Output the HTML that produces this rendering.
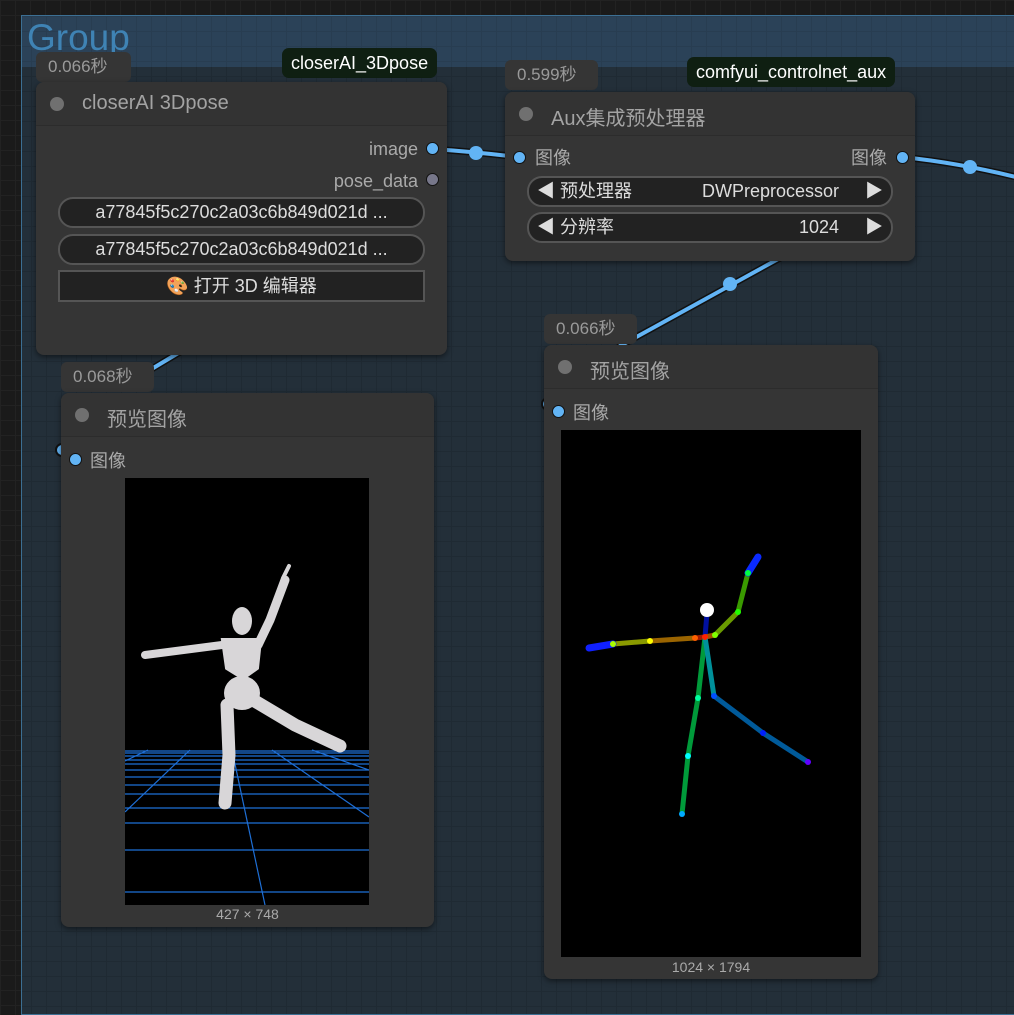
<!DOCTYPE html>
<html><head><meta charset="utf-8"><style>
*{box-sizing:border-box;margin:0;padding:0}
body{width:1014px;height:1005px;overflow:hidden;background:#1a1a1a;position:relative;font-family:"Liberation Sans","Noto Sans CJK SC",sans-serif;
background-image:linear-gradient(#222 1px,transparent 1px),linear-gradient(90deg,#222 1px,transparent 1px);background-size:15px 15px}
.grp{position:absolute;left:21px;top:15px;width:1010px;height:1000px;border:1px solid #3c6f93;background:#232f39;
background-image:linear-gradient(#1f2a33 1px,transparent 1px),linear-gradient(90deg,#1f2a33 1px,transparent 1px);background-size:15px 15px;background-position:-6px 0}
.gh{position:absolute;left:0;top:0;right:0;height:51px;background:#2b4258;background-image:linear-gradient(#283d51 1px,transparent 1px),linear-gradient(90deg,#283d51 1px,transparent 1px);background-size:15px 15px;background-position:-6px 0}
.gt{position:absolute;left:5px;top:1px;font-size:37px;color:#3f83b4}
.abs{position:absolute}
.node{position:absolute;background:#353535;border-radius:8px;box-shadow:0 2px 6px rgba(0,0,0,.5)}
.nt{height:44px;border-bottom:1px solid #2c2c2c;position:relative;font-size:20px;color:#a3a3a3;border-radius:8px 8px 0 0;background:#333}
.nt .d{position:absolute;left:14px;top:15px;width:14px;height:14px;border-radius:50%;background:#707070}
.nt span{position:absolute;left:46px;top:10px}
.time{position:absolute;background:#353535;border-radius:6px;color:#9a9a9a;font-size:17px;padding:0 12px;height:30px;line-height:30px}
.badge{position:absolute;background:#0f1f12;color:#fff;border-radius:7px;font-size:18px;height:30px;line-height:30px;padding:0 9px}
.lbl{position:absolute;font-size:18px;color:#aaa;line-height:20px}
.dot{position:absolute;width:13px;height:13px;border-radius:50%;background:#62b4f5;border:1.5px solid #111}
.w{position:absolute;height:31px;border:2px solid #555;border-radius:15px;background:#222;color:#ddd;font-size:18px;line-height:27px}
.w span{position:absolute;top:0}
</style></head><body>
<div class="grp"><div class="gh"></div><div class="gt">Group</div></div>

<svg class="abs" style="left:0;top:0" width="1014" height="1005">
<g fill="none" stroke-linecap="round">
<path d="M433 149 Q476 152 518 157" stroke="#111" stroke-width="7"/>
<path d="M433 149 Q476 152 518 157" stroke="#62b4f5" stroke-width="4"/>
<path d="M902 157 Q960 163 1020 178" stroke="#111" stroke-width="7"/>
<path d="M902 157 Q960 163 1020 178" stroke="#62b4f5" stroke-width="4"/>
<path d="M780 258 L620 346" stroke="#111" stroke-width="7"/>
<path d="M780 258 L620 346" stroke="#62b4f5" stroke-width="4"/>
<path d="M180 352 L140 376" stroke="#111" stroke-width="7"/>
<path d="M180 352 L140 376" stroke="#62b4f5" stroke-width="4"/>
</g>
<circle cx="476" cy="153" r="7" fill="#62b4f5"/>
<circle cx="970" cy="167" r="7" fill="#62b4f5"/>
<circle cx="730" cy="284" r="7" fill="#62b4f5"/>
<circle cx="62" cy="450" r="6" fill="#62b4f5" stroke="#111" stroke-width="2"/>
<circle cx="548" cy="404" r="6" fill="#62b4f5" stroke="#111" stroke-width="2"/>
</svg>

<!-- node 1 -->
<div class="time" style="left:36px;top:52px;width:95px">0.066秒</div>
<div class="badge" style="left:282px;top:48px">closerAI_3Dpose</div>
<div class="node" style="left:36px;top:82px;width:411px;height:273px">
<div class="nt"><div class="d"></div><span>closerAI 3Dpose</span></div>
<div class="lbl" style="right:29px;top:57px">image</div>
<div class="dot" style="left:390px;top:60px"></div>
<div class="lbl" style="right:29px;top:89px">pose_data</div>
<div class="dot" style="left:390px;top:91px;background:#77778a"></div>
<div class="w" style="left:22px;top:115px;width:367px;text-align:center">a77845f5c270c2a03c6b849d021d ...</div>
<div class="w" style="left:22px;top:152px;width:367px;text-align:center">a77845f5c270c2a03c6b849d021d ...</div>
<div class="w" style="left:22px;top:188px;width:367px;height:32px;border-radius:0;text-align:center;line-height:28px">🎨 打开 3D 编辑器</div>
</div>

<!-- node 2 -->
<div class="time" style="left:505px;top:60px;width:93px">0.599秒</div>
<div class="badge" style="left:687px;top:57px">comfyui_controlnet_aux</div>
<div class="node" style="left:505px;top:92px;width:410px;height:169px">
<div class="nt"><div class="d"></div><span>Aux集成预处理器</span></div>
<div class="dot" style="left:8px;top:59px"></div>
<div class="lbl" style="left:30px;top:56px">图像</div>
<div class="lbl" style="right:28px;top:56px">图像</div>
<div class="dot" style="left:391px;top:59px"></div>
<div class="w" style="left:22px;top:84px;width:366px"><span style="left:8px">◀ 预处理器</span><span style="right:52px">DWPreprocessor</span><span style="right:8px">▶</span></div>
<div class="w" style="left:22px;top:120px;width:366px"><span style="left:8px">◀ 分辨率</span><span style="right:52px">1024</span><span style="right:8px">▶</span></div>
</div>

<!-- node 3 -->
<div class="time" style="left:61px;top:362px;width:93px">0.068秒</div>
<div class="node" style="left:61px;top:393px;width:373px;height:534px">
<div class="nt"><div class="d"></div><span>预览图像</span></div>
<div class="dot" style="left:8px;top:60px"></div>
<div class="lbl" style="left:29px;top:58px">图像</div>
<svg class="abs" style="left:64px;top:85px" width="244" height="427">
<rect width="244" height="427" fill="#000"/>
<g stroke="#1e6fd6" stroke-width="1.2">
<line x1="0" y1="273" x2="244" y2="273"/><line x1="0" y1="275" x2="244" y2="275"/><line x1="0" y1="278" x2="244" y2="278"/><line x1="0" y1="282" x2="244" y2="282"/><line x1="0" y1="286" x2="244" y2="286"/><line x1="0" y1="292" x2="244" y2="292"/><line x1="0" y1="299" x2="244" y2="299"/><line x1="0" y1="307" x2="244" y2="307"/><line x1="0" y1="316" x2="244" y2="316"/><line x1="0" y1="330" x2="244" y2="330"/><line x1="0" y1="345" x2="244" y2="345"/><line x1="0" y1="372" x2="244" y2="372"/><line x1="0" y1="414" x2="244" y2="414"/>
<line x1="107" y1="272" x2="140" y2="427"/><line x1="65" y1="272" x2="0" y2="334"/><line x1="23" y1="272" x2="0" y2="283"/><line x1="147" y1="272" x2="244" y2="339"/><line x1="187" y1="272" x2="244" y2="292"/>
</g>
<g fill="#d8d6d8" stroke="#d8d6d8" stroke-linecap="round">
<path d="M97 167 L20 177" stroke-width="8" fill="none"/>
<path d="M133 167 L145 142 L160 102" stroke-width="9" fill="none"/>
<path d="M102 227 L104 277 L100 325" stroke-width="13" fill="none"/>
<path d="M128 222 L170 247 L215 268" stroke-width="13" fill="none"/>
<ellipse cx="117" cy="143" rx="10" ry="14" stroke="none"/>
<path d="M98 162 L135 162 L132 190 L118 200 L102 190 Z" stroke-width="4"/>
<ellipse cx="117" cy="215" rx="18" ry="17" stroke="none"/>
<path d="M158 100 L164 88" stroke-width="4"/>
</g>
</svg>
<div class="abs" style="left:0;right:0;top:513px;text-align:center;font-size:14px;color:#aaa">427 × 748</div>
</div>

<!-- node 4 -->
<div class="time" style="left:544px;top:314px;width:93px">0.066秒</div>
<div class="node" style="left:544px;top:345px;width:334px;height:634px">
<div class="nt"><div class="d"></div><span>预览图像</span></div>
<div class="dot" style="left:8px;top:60px"></div>
<div class="lbl" style="left:29px;top:58px">图像</div>
<svg class="abs" style="left:17px;top:85px" width="300" height="527">
<rect width="300" height="527" fill="#000"/>
<g stroke-width="5" stroke-linecap="round" fill="none">
<path d="M144 207 L146 183" stroke="#0010a0"/>
<path d="M144 207 L134 208" stroke="#a01a00"/>
<path d="M134 208 L89 211" stroke="#9a6400"/>
<path d="M89 211 L52 214" stroke="#8a9a00"/>
<path d="M144 207 L154 205" stroke="#a05000"/>
<path d="M154 205 L177 182" stroke="#6a9a00"/>
<path d="M177 182 L187 143" stroke="#3a9a00"/>
<path d="M187 143 L197 127" stroke="#0a2aff" stroke-width="7"/>
<path d="M144 207 L137 268 L127 326 L121 384" stroke="#009a3a"/>
<path d="M144 207 L153 266" stroke="#00909a"/>
<path d="M153 266 L202 303 L247 332" stroke="#005a9a"/>
<path d="M52 214 L28 218" stroke="#1020ff" stroke-width="7"/>
</g>
<circle cx="146" cy="180" r="7" fill="#fff"/>
<g>
<circle cx="134" cy="208" r="3" fill="#ff6000"/><circle cx="144" cy="207" r="3" fill="#ff2000"/><circle cx="89" cy="211" r="3" fill="#ffff00"/><circle cx="52" cy="214" r="3" fill="#aaff00"/><circle cx="154" cy="205" r="3" fill="#80ff00"/><circle cx="177" cy="182" r="3" fill="#20ff00"/><circle cx="187" cy="143" r="3" fill="#00ff40"/><circle cx="137" cy="268" r="3" fill="#00ffa0"/><circle cx="127" cy="326" r="3" fill="#00ffff"/><circle cx="121" cy="384" r="3" fill="#00aaff"/><circle cx="153" cy="266" r="3" fill="#0050ff"/><circle cx="202" cy="303" r="3" fill="#0020ff"/><circle cx="247" cy="332" r="3" fill="#6000ff"/>
</g>
</svg>
<div class="abs" style="left:0;right:0;top:614px;text-align:center;font-size:14px;color:#aaa">1024 × 1794</div>
</div>
</body></html>
